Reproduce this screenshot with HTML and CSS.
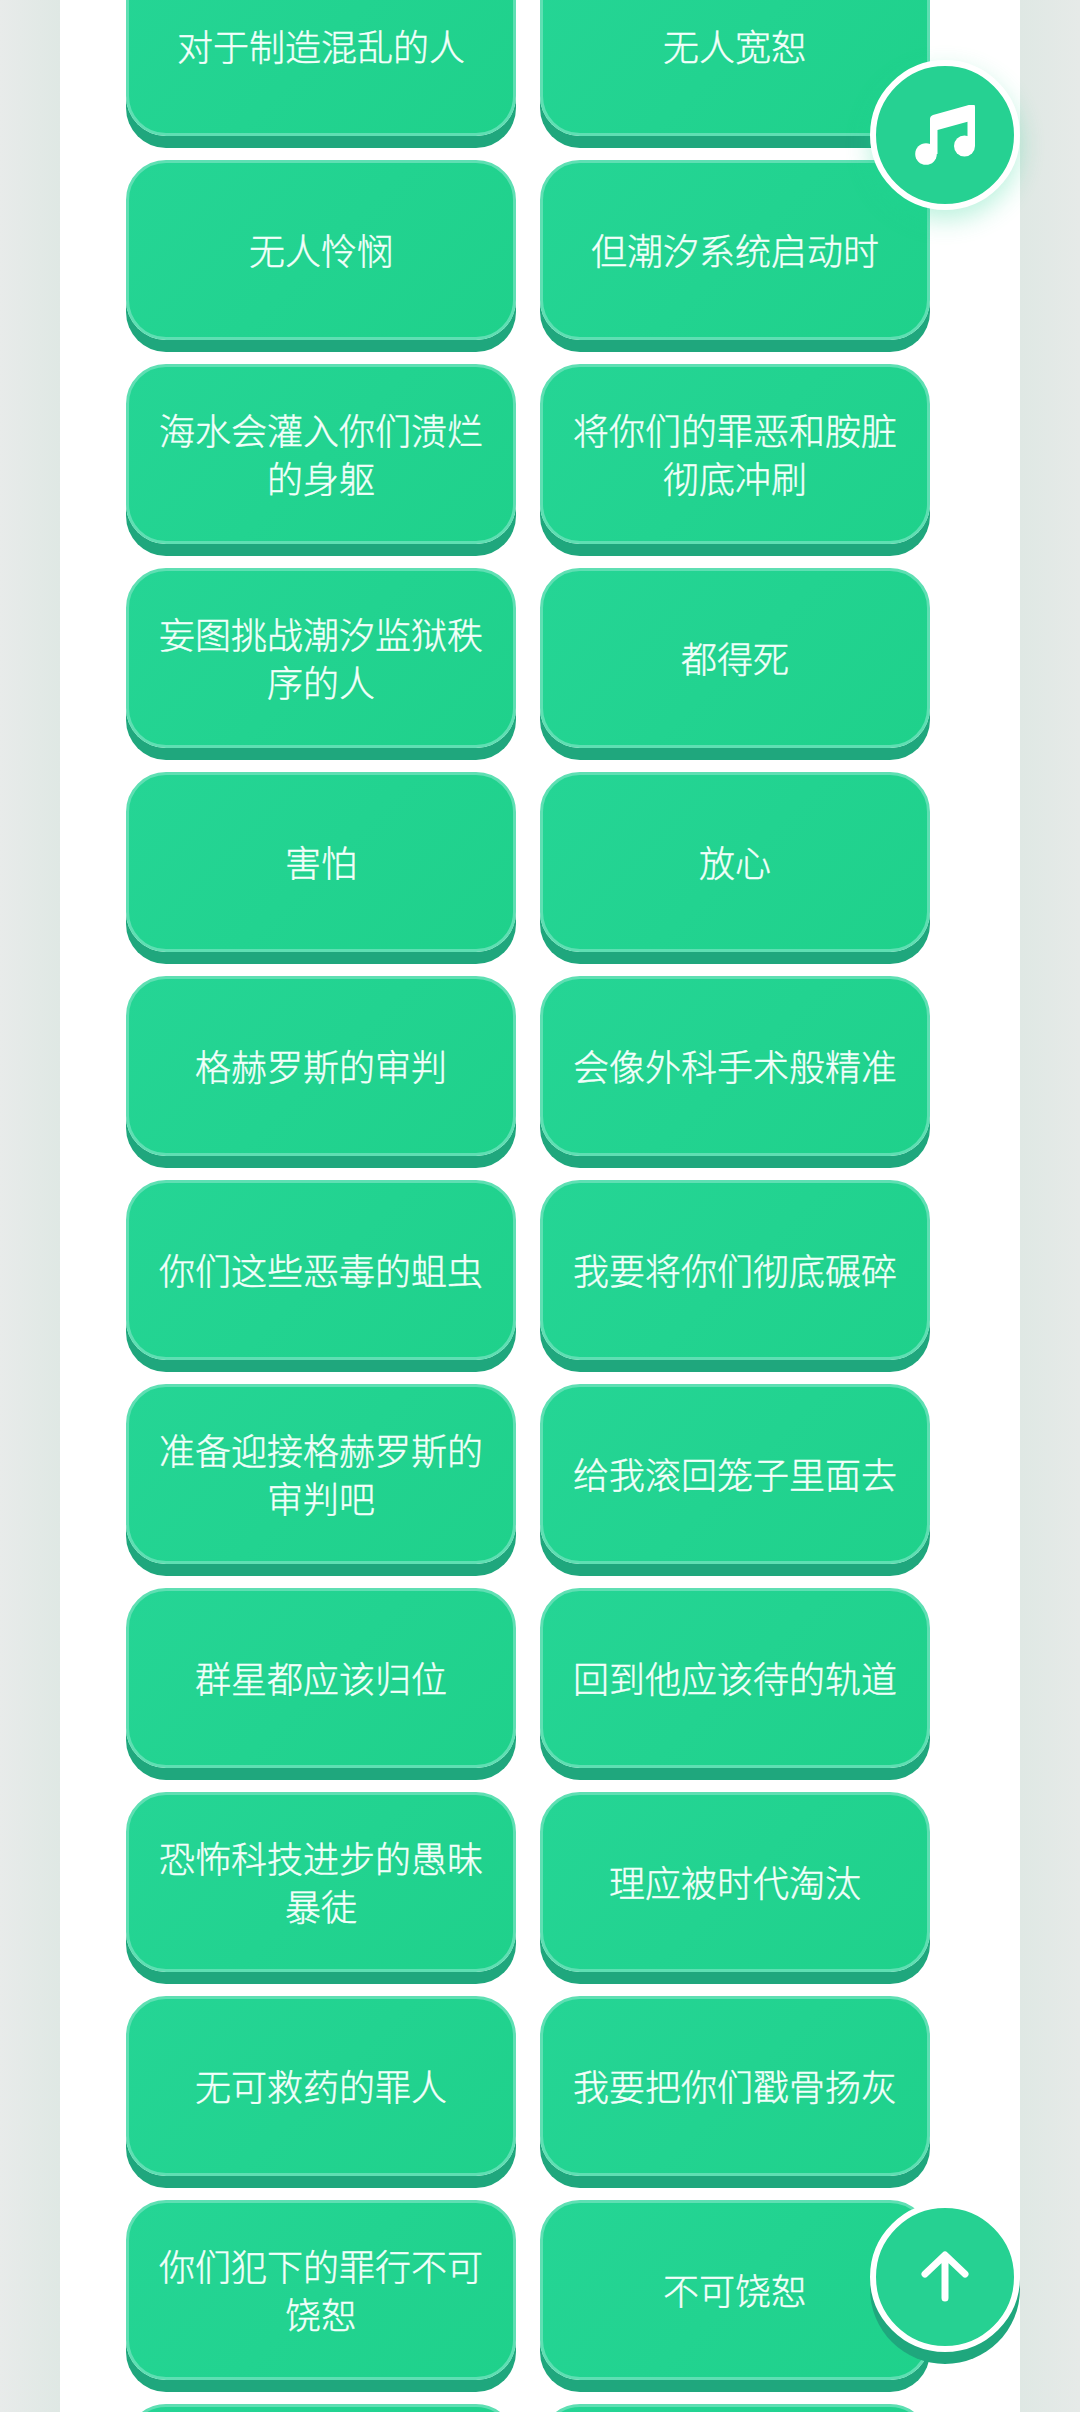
FILE: index.html
```html
<!DOCTYPE html>
<html lang="zh-CN">
<head>
<meta charset="UTF-8">
<meta name="viewport" content="width=device-width, initial-scale=1.0">
<title>语音按钮</title>
<link rel="stylesheet" href="styles.css">
</head>
<body>

<!-- 主内容 -->
<div class="panel">
    <div class="grid">
        <button class="voice">对于制造混乱的人</button>
        <button class="voice">无人宽恕</button>
        <button class="voice">无人怜悯</button>
        <button class="voice">但潮汐系统启动时</button>
        <button class="voice">海水会灌入你们溃烂的身躯</button>
        <button class="voice">将你们的罪恶和胺脏彻底冲刷</button>
        <button class="voice">妄图挑战潮汐监狱秩序的人</button>
        <button class="voice">都得死</button>
        <button class="voice">害怕</button>
        <button class="voice">放心</button>
        <button class="voice">格赫罗斯的审判</button>
        <button class="voice">会像外科手术般精准</button>
        <button class="voice">你们这些恶毒的蛆虫</button>
        <button class="voice">我要将你们彻底碾碎</button>
        <button class="voice">准备迎接格赫罗斯的审判吧</button>
        <button class="voice">给我滚回笼子里面去</button>
        <button class="voice">群星都应该归位</button>
        <button class="voice">回到他应该待的轨道</button>
        <button class="voice">恐怖科技进步的愚昧暴徒</button>
        <button class="voice">理应被时代淘汰</button>
        <button class="voice">无可救药的罪人</button>
        <button class="voice">我要把你们戳骨扬灰</button>
        <button class="voice">你们犯下的罪行不可饶恕</button>
        <button class="voice">不可饶恕</button>
        <button class="voice"></button>
        <button class="voice"></button>
    </div>
</div>

<!-- 悬浮按钮 -->
<button class="fab music" aria-label="音乐">
    <svg width="60" height="60" viewBox="0 1 60 60">
        <path d="M15 15 Q15 12 18 11 L56 0.4 Q60 -0.6 60 3 V42 H52.5 V17.7 L22.5 26 V50 H15 Z" fill="#fff"/>
        <circle cx="49.5" cy="42" r="10.5" fill="#fff"/>
        <circle cx="11" cy="50" r="10.8" fill="#fff"/>
    </svg>
</button>
<button class="fab top" aria-label="回到顶部">
    <svg width="60" height="60" viewBox="0 0 60 60">
        <path d="M30 51 V9 M10 27 L30 8 L50 27" fill="none" stroke="#fff" stroke-width="7" stroke-linecap="round" stroke-linejoin="round"/>
    </svg>
</button>

</body>
</html>
```

FILE: styles.css
```css
html, body {
    height: 100%;
}

body {
    margin: 0;
    padding: 0;
    overflow: hidden;
    font-family: "Noto Sans CJK SC", "Noto Sans", sans-serif;
    background: linear-gradient(to right, #e8ebea 0, #dfe8e4 60px, #dfe8e4 1020px, #e6eae8 1080px);
}

.panel {
    width: 960px;
    margin: 0 auto;
    background: #ffffff;
    min-height: 100%;
    box-sizing: border-box;
    padding-left: 66px;
}

.grid {
    display: grid;
    grid-template-columns: 390px 390px;
    column-gap: 24px;
    row-gap: 24px;
    margin-top: -44px;
}

.voice {
    height: 180px;
    padding: 0 24px 2px;
    box-sizing: border-box;
    border: 3px solid #5fdfb3;
    border-radius: 40px;
    background: linear-gradient(135deg, #25d595, #1fd18b);
    box-shadow: 0 12px 0 #1fa77d;
    color: #f2fffa;
    -webkit-text-stroke: 0.4px #f2fffa;
    font-family: inherit;
    font-size: 36px;
    font-weight: 300;
    line-height: 48px;
    text-align: center;
    cursor: pointer;
}

.fab {
    position: fixed;
    left: 870px;
    width: 150px;
    height: 150px;
    padding: 0;
    box-sizing: border-box;
    border: 6px solid #ffffff;
    border-radius: 50%;
    background: #26d192;
    display: flex;
    align-items: center;
    justify-content: center;
    cursor: pointer;
}

.fab.music {
    top: 60px;
    box-shadow: 0 10px 24px rgba(34, 212, 146, 0.3);
}

.fab.top {
    top: 2202px;
    box-shadow: 0 12px 0 #1fa77d;
}
```
